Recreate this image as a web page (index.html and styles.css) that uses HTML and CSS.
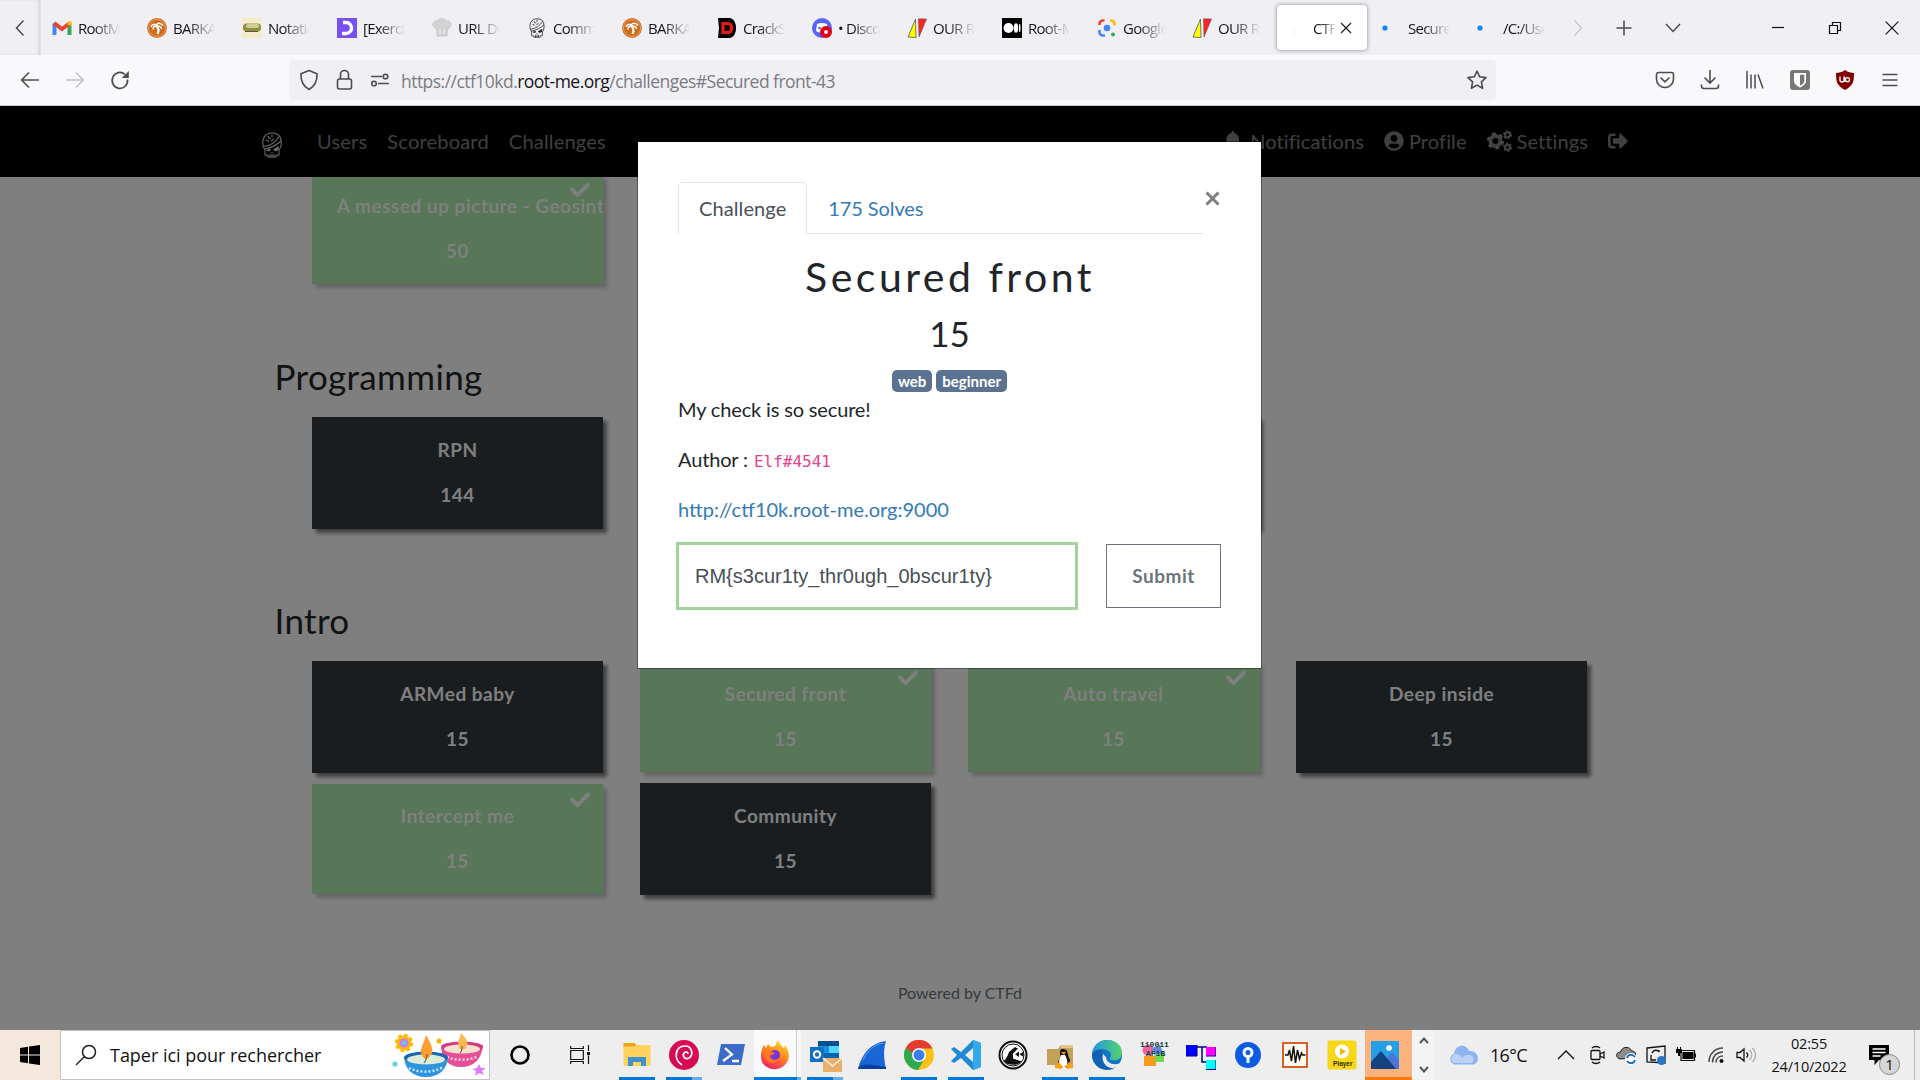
FILE: index.html
```html
<!DOCTYPE html>
<html lang="en">
<head>
<meta charset="utf-8">
<title>CTFd</title>
<link rel="stylesheet" href="styles.css">
</head>
<body>
<svg class="defs" width="0" height="0">
  <defs>
    <symbol id="check" viewBox="0 0 512 512"><path fill="currentColor" d="M173.898 439.404l-166.4-166.4c-9.997-9.997-9.997-26.206 0-36.204l36.203-36.204c9.997-9.998 26.207-9.998 36.204 0L192 312.69 432.095 72.596c9.997-9.997 26.207-9.997 36.204 0l36.203 36.204c9.997 9.997 9.997 26.206 0 36.204l-294.4 294.401c-9.998 9.997-26.207 9.997-36.204-.001z"/></symbol>
    <symbol id="skull" viewBox="0 0 20 26"><g fill="none" stroke="currentColor" stroke-width="1.050"><path d="M3 18C0 14 .5 8 2 5.500 4 2 7 1 10 1s7 1 8.500 5c1.200 4 1 9-1.500 12v5l-3 .5v1.500H6v-1.500l-3-.5z"/><path d="M1.500 14.500C8 14 14 10 17 4.500M2.500 17c7-1 12-4 16.500-8M6 4l1 2 2 .5M10 2.500v2.500M4 8l3 1.500M9 9l3-2M8 22v3M10 22v3M12 22v3"/></g><path fill="currentColor" d="M4 18l4-1 1 1.500-3 1zM11 17.500l6-3.500-.5 4-3 1.500zM9 21l1-1.500 1 1.500z"/></symbol>
    <symbol id="palm" viewBox="0 0 20 20"><circle cx="10" cy="10" r="9.900" fill="#cf6a18"/><circle cx="10" cy="10" r="8.500" fill="none" stroke="#eeb98a" stroke-width=".7"/><path d="M10.500 16c1.500-3 1-6-1-8" fill="none" stroke="#fff" stroke-width="2.200"/><path d="M9.500 8C7.500 5 5 6.500 4 9M9.500 8c-2.500 0-3.500 1.500-3.500 3.500M9 8c1-4 5-3.500 7-.5M9.500 8c3-.5 5 1 5 3" fill="none" stroke="#fff" stroke-width="1.500"/></symbol>
    <symbol id="tri" viewBox="0 0 20 20"><path d="M1 19L8.500 1 9 19.500z" fill="#ff0" stroke="#555" stroke-width=".8"/><path d="M11.500.8L19.500 1 12 19z" fill="#f22" stroke="#555" stroke-width=".6"/></symbol>
  </defs>
</svg>

<header class="tabbar">
  <div class="scroll-left"><svg width="10" height="18" viewBox="0 0 10 18"><path d="M8.500 1.500L1.500 9l7 7.500" fill="none" stroke="#4b4b55" stroke-width="1.500"/></svg></div>
  <div class="tabs">
    <div class="tab"><svg viewBox="0 0 20 20"><path d="M2.500 17V5.500" stroke="#4285f4" stroke-width="4"/><path d="M17.500 17V5.500" stroke="#34a853" stroke-width="4"/><path d="M2 5l8 6 8-6" fill="none" stroke="#ea4335" stroke-width="4"/><path d="M15.500 7V4l4-1v5z" fill="#fbbc04"/></svg><span>RootMe</span></div>
    <div class="tab"><svg><use href="#palm"/></svg><span>BARKAN</span></div>
    <div class="tab"><svg viewBox="0 0 20 20"><path fill="#f7ecca" d="M0 0h20v20H0z"/><rect x="1" y="5.500" width="18" height="8" rx="3.500" fill="#8f8f4a"/><rect x="4" y="6" width="13" height="4" rx="2" fill="#cfcf9a"/><path d="M3 13.500h13" stroke="#5a5a2a"/></svg><span>Notation</span></div>
    <div class="tab"><svg viewBox="0 0 20 20"><path fill="#7950f2" d="M0 0h20v20H0z"/><path d="M6 4.500h3a5.300 5.300 0 0 1 0 11H5" fill="none" stroke="#fff" stroke-width="3.400"/></svg><span>[Exercice</span></div>
    <div class="tab"><svg viewBox="0 0 20 20"><path d="M5 18l-.5-7C-1 9 0 2 5.500 3 7-.5 13-.5 14.500 3c5.500-1 6.500 6 1 8L15 18z" fill="#d2d2d2" stroke="#bbb" stroke-width=".6"/><path d="M8 11v5M12 11v5" stroke="#eee"/></svg><span>URL De</span></div>
    <div class="tab"><svg><use href="#skull"/></svg><span>Commu</span></div>
    <div class="tab"><svg><use href="#palm"/></svg><span>BARKAN</span></div>
    <div class="tab"><svg viewBox="0 0 20 20"><path d="M1 0h12c4 1 6 5 6 10s-2 9-6 10H1l1-10z" fill="#000"/><path d="M6 5.500h4.500c3 0 4 2 4 4.500s-1 4.500-4 4.500H6z" fill="none" stroke="#f11616" stroke-width="3.200"/></svg><span>CrackSt</span></div>
    <div class="tab"><svg viewBox="0 0 20 20"><circle cx="10" cy="10" r="10" fill="#5865f2"/><path d="M5 6c3-1.500 7-1.500 10 0l1 7-3 1-6 .5L4 13z" fill="#fff"/><circle cx="7.500" cy="10" r="1.300" fill="#5865f2"/><circle cx="14" cy="14" r="6" fill="#e00018"/><circle cx="14" cy="14" r="1.900" fill="#fff"/></svg><span>• Discor</span></div>
    <div class="tab"><svg><use href="#tri"/></svg><span>OUR RO</span></div>
    <div class="tab"><svg viewBox="0 0 20 20"><path d="M0 0h20v20H0z"/><g fill="#fff"><circle cx="6.500" cy="10" r="5"/><ellipse cx="14" cy="10" rx="2.200" ry="4.700"/><ellipse cx="17.700" cy="10" rx=".8" ry="4.200"/></g></svg><span>Root-Me</span></div>
    <div class="tab"><svg viewBox="0 0 20 20" fill="none" stroke-width="2.600"><path d="M2.500 7V6A3.500 3.500 0 0 1 6 2.500h1.500" stroke="#ea4335"/><path d="M13 2.500h1A3.500 3.500 0 0 1 17.500 6v1.500" stroke="#fbbc04"/><path d="M2.500 12v2A3.500 3.500 0 0 0 6 17.500h2" stroke="#4285f4"/><circle cx="10" cy="10" r="3.300" fill="#4285f4"/><circle cx="16" cy="16.500" r="2" fill="#34a853"/></svg><span>Google</span></div>
    <div class="tab"><svg><use href="#tri"/></svg><span>OUR RO</span></div>
    <div class="tab active"><svg viewBox="0 0 20 20"><circle cx="7" cy="14" r=".7" fill="#ccc"/></svg><span>CTFd</span><svg class="tab-x" viewBox="0 0 12 12"><path d="M1 1l10 10M11 1L1 11" stroke="#222" stroke-width="1.300"/></svg></div>
    <div class="tab"><svg viewBox="0 0 20 20"><circle cx="3" cy="10" r="2.600" fill="#0a84ff"/></svg><span>Secured</span></div>
    <div class="tab"><svg viewBox="0 0 20 20"><circle cx="3" cy="10" r="2.600" fill="#0a84ff"/></svg><span>/C:/Users</span></div>
  </div>
  <div class="tab-tools">
    <svg width="10" height="18" viewBox="0 0 10 18"><path d="M1.500 1.500l7 7.500-7 7.500" fill="none" stroke="#c9c9ce" stroke-width="1.500"/></svg>
    <svg width="16" height="16" viewBox="0 0 16 16"><path d="M8 .5v15M.5 8h15" stroke="#4b4b55" stroke-width="1.500"/></svg>
    <svg width="16" height="10" viewBox="0 0 16 10"><path d="M1 1l7 7.500L15 1" fill="none" stroke="#4b4b55" stroke-width="1.500"/></svg>
  </div>
  <div class="win-tools">
    <svg width="14" height="14" viewBox="0 0 14 14"><path d="M1 6.500h12" stroke="#111" stroke-width="1.200"/></svg>
    <svg width="14" height="14" viewBox="0 0 14 14"><path d="M1.500 4.500h8v8h-8zM4.500 4V1.500h8v8H10" fill="none" stroke="#111" stroke-width="1.200"/></svg>
    <svg width="14" height="14" viewBox="0 0 14 14"><path d="M.7.700l12.600 12.600M13.300.7L.7 13.300" stroke="#111" stroke-width="1.200"/></svg>
  </div>
</header>

<div class="toolbar">
  <div class="nav-buttons">
    <svg width="20" height="20" viewBox="0 0 20 20"><path d="M19 10H2M9 2.500L1.700 10 9 17.500" fill="none" stroke="#4b4b55" stroke-width="1.600"/></svg>
    <svg width="20" height="20" viewBox="0 0 20 20"><path d="M1 10h17M11 2.500l7.300 7.500-7.300 7.500" fill="none" stroke="#c0c0c6" stroke-width="1.600"/></svg>
    <svg width="20" height="20" viewBox="0 0 20 20"><path d="M17.500 9.500A7.700 8 0 1 1 15 4.500" fill="none" stroke="#4b4b55" stroke-width="1.700"/><path d="M18.800 1v7h-7z" fill="#4b4b55"/></svg>
  </div>
  <div class="urlbar">
    <svg width="20" height="22" viewBox="0 0 20 22"><path d="M10 1.500l8 3.300c.3 7-1.500 12-8 15.700C3.500 16.800 1.700 11.800 2 4.800z" fill="none" stroke="#4b4b55" stroke-width="1.600" stroke-linejoin="round"/></svg>
    <svg width="17" height="22" viewBox="0 0 17 22"><rect x="1.500" y="10" width="14" height="10" rx="2" fill="none" stroke="#4b4b55" stroke-width="1.600"/><path d="M4.500 10V5.500a4 4 0 0 1 8 0V10" fill="none" stroke="#4b4b55" stroke-width="1.600"/></svg>
    <svg width="20" height="14" viewBox="0 0 20 14"><g fill="none" stroke="#4b4b55" stroke-width="1.600"><path d="M1 3.500h11M8 10.500h11"/><circle cx="15.500" cy="3.500" r="2.300"/><circle cx="4" cy="10.500" r="2.300"/></g></svg>
    <span class="url">https://ctf10kd.<b>root-me.org</b>/challenges#Secured front-43</span>
    <svg class="star" width="22" height="22" viewBox="0 0 22 22"><path d="M11 2l2.700 5.800 6.300.8-4.600 4.300 1.200 6.300L11 16.100l-5.600 3.100 1.200-6.300L2 8.600l6.300-.8z" fill="none" stroke="#4b4b55" stroke-width="1.600" stroke-linejoin="round"/></svg>
  </div>
  <div class="extensions">
    <svg viewBox="0 0 20 20"><path d="M3.500 2.500h13A2 2 0 0 1 18.500 4.500v4.500a8.500 8.500 0 0 1-17 0V4.500A2 2 0 0 1 3.500 2.500zM5.500 7.500l4.500 4.300 4.500-4.300" fill="none" stroke="#4b4b55" stroke-width="1.600"/></svg>
    <svg viewBox="0 0 20 20"><path d="M10 0v12.500M4.500 7.500L10 13l5.500-5.500M1.500 14.500V16a2.500 2.500 0 0 0 2.500 2.500h12a2.500 2.500 0 0 0 2.500-2.500v-1.500" fill="none" stroke="#4b4b55" stroke-width="1.600"/></svg>
    <svg viewBox="0 0 20 20"><path d="M2 1v17.500M6 4.500v14M10 4.500v14M13 4.500l5 14" fill="none" stroke="#4b4b55" stroke-width="1.500"/></svg>
    <svg viewBox="0 0 20 20"><rect width="20" height="20" rx="3" fill="#777"/><path d="M4 3h12v8c0 3-3 5-6 6.500C7 16 4 14 4 11z" fill="#fff"/><path d="M10 4.700h4.300V11c0 2-2 3.500-4.300 4.700z" fill="#777"/></svg>
    <svg viewBox="0 0 20 20"><path d="M10 0c3 2.500 6 2.500 9 3-.2 8 0 12-9 17C1 15 1.200 11 1 3c3-.5 6-.5 9-3z" fill="#800000"/><path d="M5 6.500v3.500a2 2 0 0 0 4 0V6.500M9.500 6.500V12" fill="none" stroke="#fff" stroke-width="1.300"/><circle cx="12.500" cy="9.700" r="2" fill="none" stroke="#fff" stroke-width="1.300"/></svg>
    <svg viewBox="0 0 20 20"><path d="M2.500 4.500h15M2.500 10h15M2.500 15.500h15" stroke="#4b4b55" stroke-width="1.500"/></svg>
  </div>
</div>

<div class="page">
  <nav class="navbar">
    <svg class="logo" width="20" height="26"><use href="#skull"/></svg>
    <div class="nav-links"><a>Users</a><a>Scoreboard</a><a>Challenges</a></div>
    <div class="nav-user">
      <a class="bell"><svg width="17.500" height="20" viewBox="0 0 448 512"><path fill="currentColor" d="M224 512c35.320 0 63.970-28.650 63.970-64H160.030c0 35.350 28.650 64 63.970 64zm215.390-149.710c-19.320-20.760-55.470-51.990-55.470-154.290 0-77.700-54.480-139.900-127.940-155.160V32c0-17.670-14.320-32-31.980-32s-31.980 14.330-31.980 32v20.840C118.560 68.100 64.080 130.300 64.080 208c0 102.300-36.150 133.530-55.470 154.290-6 6.450-8.660 14.160-8.610 21.710.11 16.400 12.980 32 32.100 32h383.800c19.120 0 32-15.600 32.100-32 .05-7.550-2.610-15.270-8.610-21.710z"/></svg>Notifications</a>
      <a><svg width="20" height="20" viewBox="0 0 496 512"><path fill="currentColor" d="M248 8C111 8 0 119 0 256s111 248 248 248 248-111 248-248S385 8 248 8zm0 96c48.600 0 88 39.400 88 88s-39.400 88-88 88-88-39.400-88-88 39.400-88 88-88zm0 344c-58.700 0-111.300-26.600-146.500-68.200 18.800-35.400 55.600-59.800 98.500-59.800 2.400 0 4.800.4 7.100 1.100 13 4.200 26.600 6.900 40.900 6.900 14.300 0 28-2.700 40.900-6.900 2.300-.7 4.700-1.100 7.100-1.100 42.900 0 79.700 24.400 98.500 59.800C359.300 421.400 306.700 448 248 448z"/></svg>Profile</a>
      <a><svg width="25" height="22" viewBox="0 0 25 22" fill="none" stroke="currentColor"><circle cx="8.500" cy="11" r="5" stroke-width="4"/><circle cx="8.500" cy="11" r="7.600" stroke-width="2.200" stroke-dasharray="4 3.960"/><circle cx="20.500" cy="4.800" r="2.500" stroke-width="2"/><circle cx="20.500" cy="4.800" r="3.900" stroke-width="1.300" stroke-dasharray="2 2.080"/><circle cx="20.500" cy="17.200" r="2.500" stroke-width="2"/><circle cx="20.500" cy="17.200" r="3.900" stroke-width="1.300" stroke-dasharray="2 2.080"/></svg>Settings</a>
      <a><svg width="20" height="20" viewBox="0 0 512 512"><path fill="currentColor" d="M497 273L329 441c-15 15-41 4.500-41-17v-96H152c-13.300 0-24-10.700-24-24v-96c0-13.300 10.700-24 24-24h136V88c0-21.400 25.900-32 41-17l168 168c9.300 9.400 9.300 24.600 0 34zM192 436v-40c0-6.600-5.400-12-12-12H96c-17.700 0-32-14.300-32-32V160c0-17.700 14.300-32 32-32h84c6.600 0 12-5.400 12-12V76c0-6.600-5.400-12-12-12H96c-53 0-96 43-96 96v192c0 53 43 96 96 96h84c6.600 0 12-5.400 12-12z"/></svg></a>
    </div>
  </nav>

  <main class="board">
    <section class="first">
      <div class="cards">
        <div class="card solved"><svg class="tick"><use href="#check"/></svg><p>A messed up picture - Geosint</p><p>50</p></div>
      </div>
    </section>
    <section>
      <h3>Programming</h3>
      <div class="cards">
        <div class="card"><p>RPN</p><p>144</p></div>
        <div class="card"></div>
        <div class="card"></div>
      </div>
    </section>
    <section>
      <h3>Intro</h3>
      <div class="cards">
        <div class="card"><p>ARMed baby</p><p>15</p></div>
        <div class="card solved"><svg class="tick"><use href="#check"/></svg><p>Secured front</p><p>15</p></div>
        <div class="card solved"><svg class="tick"><use href="#check"/></svg><p>Auto travel</p><p>15</p></div>
        <div class="card"><p>Deep inside</p><p>15</p></div>
        <div class="card solved"><svg class="tick"><use href="#check"/></svg><p>Intercept me</p><p>15</p></div>
        <div class="card"><p>Community</p><p>15</p></div>
      </div>
    </section>
    <footer>Powered by CTFd</footer>
  </main>

  <div class="backdrop"></div>
  <div class="modal">
    <div class="modal-head">
      <div class="modal-tabs"><a class="current">Challenge</a><a>175 Solves</a></div>
      <svg class="close" width="15" height="15" viewBox="0 0 15 15"><path d="M1.500 1.500l12 12M13.500 1.500l-12 12" stroke="#7f7f7f" stroke-width="3"/></svg>
    </div>
    <h2>Secured front</h2>
    <h3>15</h3>
    <div class="badges"><span>web</span><span>beginner</span></div>
    <p>My check is so secure!</p>
    <p>Author : <code>Elf#4541</code></p>
    <p><a>http://ctf10k.root-me.org:9000</a></p>
    <div class="answer"><div class="field">RM{s3cur1ty_thr0ugh_0bscur1ty}</div><div class="submit">Submit</div></div>
  </div>
</div>

<div class="taskbar">
  <div class="start"><svg width="20" height="20" viewBox="0 0 20 20"><path d="M0 3l8-1.200v7.700H0zM9 1.600L20 0v9.500H9zM0 10.500h8v7.700L0 17zM9 10.500h11V20L9 18.400z"/></svg></div>
  <div class="search">
    <svg width="22" height="22" viewBox="0 0 22 22"><circle cx="14" cy="8" r="6.500" fill="none" stroke="#222" stroke-width="1.500"/><path d="M9.500 12.500L1 21" stroke="#222" stroke-width="1.500"/></svg>
    <span>Taper ici pour rechercher</span>
    <svg class="diya" width="94" height="46" viewBox="0 0 94 46">
      <circle cx="13" cy="11" r="7.500" fill="#ffb900"/><circle cx="13" cy="11" r="8" fill="none" stroke="#ffb900" stroke-width="2.500" stroke-dasharray="3.500 2.780"/><circle cx="13" cy="11" r="4.500" fill="#c97cf5"/><circle cx="13" cy="11" r="2.300" fill="#5ecbe8"/>
      <circle cx="48" cy="9" r="2.600" fill="#ffb900"/><circle cx="4" cy="32" r="2.600" fill="#5fd6e8"/>
      <path d="M50 15c1 12 7 20 20 20s21-8 22-22z" fill="#e64f97"/><ellipse cx="71" cy="15" rx="21" ry="5.500" fill="#d23a86"/><ellipse cx="71" cy="17" rx="18" ry="4.500" fill="#f7e1cf"/><path d="M70 18c-6-8-1-10 0-17 7 7 8 12 4 16z" fill="#ffb84f"/><path d="M69 21c2-2 2-4 2-7" fill="none" stroke="#543"/><path d="M56 25c9 4 22 4 31-1" fill="none" stroke="#fbd3e4" stroke-width="2.500" stroke-dasharray="2 2"/>
      <path d="M13 25c1 12 8 20 22 20s21-8 22-20z" fill="#2f93e0"/><ellipse cx="35" cy="25.500" rx="22" ry="6" fill="#1766b3"/><ellipse cx="35" cy="27.500" rx="19" ry="5" fill="#dcecd8"/><path d="M34 27c-8-8-2-12 1-24 7 12 9 18 2 23z" fill="#ff9d2e"/><path d="M33 31c2-3 3-5 3-9" fill="none" stroke="#543" stroke-width="1"/><path d="M18 36c10 5 24 5 34-1" fill="none" stroke="#c9e8fb" stroke-width="2.500" stroke-dasharray="2 2"/>
      <path d="M88 32l2 4 5 0-4 3 2 4-5-2-4 3 1-5-4-2 5-1z" fill="#dd7cf5"/>
    </svg>
  </div>
  <div class="sys"><svg width="22" height="22" viewBox="0 0 22 22"><circle cx="11" cy="11" r="8.500" fill="none" stroke="#000" stroke-width="2.600"/></svg></div>
  <div class="sys"><svg width="20" height="20" viewBox="0 0 20 20" fill="none" stroke="#111" stroke-width="1.200"><path d="M.7 5.500h12.600v9H.7zM.7 1v2.500h12.600V1M.7 19v-2.500h12.600V19M18.500 0v6M18.500 10.500V19"/><path d="M17 7h3v3h-3z" fill="#111" stroke="none"/></svg></div>
  <div class="apps">
    <div class="app open"><svg viewBox="0 0 30 30"><path d="M1.500 3h11l2.500 3v3H1.500z" fill="#e8a60c"/><path d="M1.500 6.500h11L15 5h13.500v21h-27z" fill="#ffd35c"/><path d="M6 26v-9h18v9h-5v-4h-8v4z" fill="#3e92cf"/></svg></div>
    <div class="app open multi"><svg viewBox="0 0 30 30"><circle cx="15" cy="15" r="15" fill="#d70a53"/><path d="M13 25C4 19 6 6 16 6c7 0 9 9 4 12-4 2-7-2-5-5 2-2 4-1 4 1" fill="none" stroke="#fff" stroke-width="1.700"/></svg></div>
    <div class="app"><svg viewBox="0 0 30 30"><path d="M5 4h24l-4 21H1z" fill="#3b6cc9"/><path d="M9 8l7 6.500-9 6.500M16 21h7" fill="none" stroke="#fff" stroke-width="2.300"/></svg></div>
    <div class="app open firefox"><svg viewBox="0 0 30 30"><defs><linearGradient id="ff" x1=".8" y1="0" x2=".3" y2="1"><stop offset="0" stop-color="#ffe226"/><stop offset=".45" stop-color="#ff8a1c"/><stop offset="1" stop-color="#ee2360"/></linearGradient></defs><path d="M18 0c1 5 4 4 5 8 2-1 2-2 2-3 4 5 5 12 2 17-6 10-20 9-25 0C0 17 1 9 4 5l2 3 2-4 3 3c3 0 4-1 5-2 0-2 1-4 2-5z" fill="url(#ff)"/><circle cx="15" cy="15" r="5" fill="#7a35d8"/><path d="M3 9c5 0 7 0 8 3l4 1c-3 3-5 1-6 4 1 4 7 4 10 1-3 7-12 6-14-1z" fill="#ff7a1f"/></svg></div>
    <div class="app open multi"><svg class="outlook" viewBox="0 0 34 32"><path d="M9 1h21v20H9z" fill="#1490df"/><path d="M9 1h21v5H9z" fill="#0a4f92"/><path d="M20 6h10v7H20z" fill="#50d9ff"/><path d="M9 13h21v9H9z" fill="#0364b8"/><path d="M1 7h14v15H1z" fill="#1070c4"/><circle cx="8" cy="14.500" r="3.200" fill="none" stroke="#fff" stroke-width="2"/><path d="M14 18h19v14H14z" fill="#e8b06a"/><path d="M14 18l9.500 8 9.500-8" fill="none" stroke="#fff3dd" stroke-width="1.400"/></svg></div>
    <div class="app"><svg viewBox="0 0 30 30"><path d="M1 29C5 13 14 3 29 1c-3 9-2 19 0 28z" fill="#1a66d6"/><path d="M1 29c2-6 10-5 28-2v2z" fill="#0a3fa0"/><path d="M6 20C11 10 17 5 26 3" fill="none" stroke="#5aa2ff"/></svg></div>
    <div class="app open"><svg viewBox="0 0 30 30"><circle cx="15" cy="15" r="15" fill="#fbc116"/><path d="M2 7.500A15 15 0 0 1 28 7.500H15z" fill="#e33b2e"/><path d="M2 7.500A15 15 0 0 0 14 30l7-12-6-3-6 2z" fill="#2da94f"/><path d="M2 7.500L9 18l6-9.500h13.300A15 15 0 0 0 2 7.500z" fill="#e33b2e"/><path d="M2 7.500L9 19l3-3z" fill="#2da94f"/><circle cx="15" cy="15" r="7" fill="#fff"/><circle cx="15" cy="15" r="5.500" fill="#3b7ded"/></svg></div>
    <div class="app open"><svg viewBox="0 0 30 30"><path d="M22 0l8 3v24l-8 3L10 18l-7 5-3-2 6-6-6-6 3-2 7 5zM22 8l-8 7 8 7z" fill="#1f8ad2" fill-rule="evenodd"/><path d="M22 0l8 3v24l-8 3z" fill="#35a7ee"/></svg></div>
    <div class="app"><svg viewBox="0 0 30 30"><circle cx="15" cy="15" r="13.500" fill="#fff" stroke="#111" stroke-width="2"/><circle cx="15" cy="15" r="11" fill="none" stroke="#111"/><path d="M5 21C8 20 9 17 11 12l6-5 3 1.500-5 5 0 5 9 3c-4 4-13 5-19-.5z" fill="#111"/><path d="M21 11.500v5.500l-4-2.700zM25.500 11.500v5.500l-4-2.700z" fill="#111"/></svg></div>
    <div class="app open"><svg viewBox="0 0 30 30"><path d="M2 9h11l3-4h12v20H2z" fill="#c3a257"/><path d="M16 5h12v3H16z" fill="#e0c88c"/><path d="M18 9c6 0 4 6 7 11l-1 7H12c0-6 4-8 3-13 0-3 0-5 3-5z" fill="#111"/><path d="M16 15h4c3 5 4 12-2 12s-4-8-2-12z" fill="#fff"/><path d="M10 25l4-3 4 5-2 2-6-1zM28 25l-4-3-4 5 2 2 6-1zM16 12h5l-2 3z" fill="#f5a11a"/></svg></div>
    <div class="app open"><svg viewBox="0 0 30 30"><defs><linearGradient id="eg" x1="0" x2="1"><stop offset="0" stop-color="#2197e3"/><stop offset="1" stop-color="#56d36a"/></linearGradient></defs><circle cx="15" cy="15" r="15" fill="#1573c8"/><path d="M0 14C1 5 8 0 15 0c9 0 15 6 15 12 0 7-5 9-10 8-3-.5-2-2-1-4 0-5-5-7-9-7-5 0-9 2-10 5z" fill="url(#eg)"/><path d="M11 14c-2 6 2 14 10 14 4 0 6-3 7-5-6 3-14 0-14-6z" fill="#ececec"/><path d="M11 12c-3 8 1 17 10 17C11 32 0 26 0 14c3-5 9-5 11-2z" fill="#1361b4"/></svg></div>
    <div class="app"><svg class="crypt" viewBox="0 0 30 30"><circle cx="9" cy="10" r="5.500" fill="#f0629c"/><path d="M13 8l8-3 3 8-8 3z" fill="#5b86e0"/><path d="M5 16h12v10H5z" fill="#f79a1e"/><path d="M16 14h9v8h-9z" fill="#6fd94f"/><text x="1" y="7">110011</text><text x="7" y="16">AF1B</text></svg></div>
    <div class="app"><svg viewBox="0 0 30 30"><path d="M11 7h10M16 7v15h5" fill="none" stroke="#000080" stroke-width="1.500"/><path d="M0 5h11v11H0z" fill="#00f"/><path d="M20 7h10v9H20z" fill="#f0f"/><path d="M20 20h10v9H20z" fill="#0ff"/><path d="M0 16h11V5M20 16h10V7M20 29.500h10V20" fill="none" stroke="#000080"/></svg></div>
    <div class="app"><svg viewBox="0 0 30 30"><circle cx="15" cy="15" r="13" fill="#0b5be3"/><circle cx="15" cy="12.500" r="4" fill="none" stroke="#fff" stroke-width="3"/><path d="M13.500 16h3v7h-3z" fill="#fff"/></svg></div>
    <div class="app"><svg viewBox="0 0 30 30"><path d="M3 3h24v24H3z" fill="#fff8ef" stroke="#d2622a" stroke-width="2"/><path d="M5 15h3l1.500-5 2 11 2-15 2 17 2-13 2 9 2-6 1 2h3" fill="none" stroke="#111" stroke-width="1.500"/></svg></div>
    <div class="app"><svg class="player" viewBox="0 0 30 30"><rect x=".5" y=".5" width="29" height="29" rx="2" fill="#f6d817"/><circle cx="15" cy="11.500" r="7" fill="#fff"/><path d="M13 8l6 3.500-6 3.500z" fill="#e6b800"/><text x="6" y="25.500">Player</text></svg></div>
    <div class="app photos"><svg viewBox="0 0 30 30"><path d="M1 1h28v28H1z" fill="#25a0e6"/><circle cx="19" cy="8" r="2.800" fill="#fff"/><path d="M15 20l7-8 7 8v9H15z" fill="#4b76d8"/><path d="M1 22L11 11l15 18H1z" fill="#14417f"/></svg></div>
  </div>
  <div class="scroller"><svg width="10" height="7" viewBox="0 0 10 7"><path d="M1 6l4-4.500L9 6" fill="none" stroke="#555" stroke-width="2"/></svg><svg width="10" height="7" viewBox="0 0 10 7"><path d="M1 1l4 4.500L9 1" fill="none" stroke="#555" stroke-width="2"/></svg></div>
  <div class="weather"><svg width="30" height="20" viewBox="0 0 30 20"><path d="M6 19.500a6 6 0 0 1 0-11C8-2 19-1 21 6c5-.5 9 3 9 7s-2 6.500-6 6.500z" fill="#8db2ef"/><path d="M6 18a5 5 0 0 1 1-9c4 0 6 1 7 4 3-4 9-4 11-1 2 4-1 6-3 6z" fill="#bcd2f8"/></svg><span>16°C</span></div>
  <div class="tray">
    <svg viewBox="0 0 20 20"><path d="M2 14l8-8 8 8" fill="none" stroke="#111" stroke-width="1.400"/></svg>
    <svg viewBox="0 0 20 20" fill="none" stroke="#111" stroke-width="1.300"><rect x="5" y="5.500" width="9" height="9" rx="1"/><path d="M14 9l4-2v6l-4-2M6 3c2-2 6-2 8 0M6 17c2 2 6 2 8 0"/></svg>
    <svg viewBox="0 0 20 20"><path d="M4 14C-1 13 0 7 4.500 7 6 1 14 1 15.500 6c5 0 5 5 3 7z" fill="#8b8b8b" stroke="#222"/><circle cx="15" cy="14" r="6" fill="#fff"/><path d="M11 13c1-4 6-4 8-1M19 15c-1 4-6 4-8 1" fill="none" stroke="#0a6cbd" stroke-width="1.700"/></svg>
    <svg viewBox="0 0 20 20"><path d="M1 3l18-2v17L1 17z" fill="none" stroke="#111" stroke-width="1.300"/><path d="M6 8c2-4 6-3 7-1V5M5 10v5h5" fill="none" stroke="#111" stroke-width="1.300"/><circle cx="15.500" cy="15.500" r="4.500" fill="#2a74c4"/></svg>
    <svg viewBox="0 0 20 20"><path d="M6 6.500h12v8H6z" stroke="#fff" stroke-width=".8"/><path d="M5 5.500h13.500v10H5zM19.500 8.500v4" fill="none" stroke="#111" stroke-width="1.200"/><path d="M0 4h6v4H4v3H2V8H0zM1 2h1v2H1zM4 2h1v2H4z"/></svg>
    <svg viewBox="0 0 20 20" fill="none" stroke="#111" stroke-width="1.500"><g opacity=".75"><path d="M3 17C3 9 9 3 17 3M6.500 17.500C6.500 11 11 7 17 7M10 17.500c0-4 3-6.500 7-6.500"/></g><circle cx="15.500" cy="16" r="1.300" fill="#111"/></svg>
    <svg viewBox="0 0 20 20" fill="none" stroke="#111" stroke-width="1.300"><path d="M1 7.500h3L8 4v12l-4-3.500H1zM10.500 7.500c1.500 1.500 1.500 3.500 0 5"/><path d="M13.500 5c3 3 3 7 0 10M16.500 3c4 4 4 10 0 14" stroke="#aaa"/></svg>
  </div>
  <div class="clock"><span>02:55</span><span>24/10/2022</span></div>
  <div class="notes"><svg width="22" height="22" viewBox="0 0 22 22"><path d="M1 1h20v15H11l-4.500 5v-5H1z"/><path d="M4.500 5h13M4.500 8.500h13M4.500 12h8" stroke="#fff" stroke-width="1.300"/></svg><span class="count">1</span></div>
  <div class="desktop"></div>
</div>
</body>
</html>
```
FILE: styles.css
```css
* { box-sizing: border-box; }
body { margin: 0; width: 1920px; height: 1080px; overflow: hidden; display: flex; flex-direction: column; font-family: Lato, sans-serif; font-size: 20px; line-height: 30px; color: #212529; background: #fff; }
svg { display: block; flex: none; }
.defs { position: absolute; }
h2, h3, p { margin: 0; }
h2, h3 { font-weight: 400; }

/* browser chrome */
.tabbar { flex: none; height: 55px; display: flex; background: #f0eff4; font-family: "Open Sans", sans-serif; }
.scroll-left { width: 41px; display: flex; align-items: center; padding-left: 15px; border-right: 1px solid #e0dfe5; box-shadow: inset -2px 0 2px #d9d8de; }
.tabs { display: flex; padding: 5px 0; width: 1520px; }
.tab { width: 95px; flex: none; height: 45px; display: flex; align-items: center; padding: 1px 0 0 11px; gap: 6px; border-radius: 4px; }
.tab svg { width: 20px; height: 20px; }
.tab span { width: 43px; overflow: hidden; white-space: nowrap; font-size: 15px; line-height: 22px; letter-spacing: -.75px; color: #15141a; -webkit-mask-image: linear-gradient(90deg, #000 35%, transparent 98%); mask-image: linear-gradient(90deg, #000 35%, transparent 98%); }
.tab.active { background: #fff; box-shadow: 0 0 4px rgba(0,0,0,.45); width: 90px; margin: 0 4px 0 1px; padding: 0 0 0 10px; }
.tab.active span { width: 24px; }
.tab.active .tab-x { width: 12px; height: 12px; margin-left: -3px; }
.tab-tools { display: flex; align-items: center; gap: 33px; padding-left: 12px; }
.win-tools { display: flex; align-items: center; gap: 43px; margin-left: auto; padding-right: 21px; }

.toolbar { flex: none; height: 51px; display: flex; align-items: center; background: #f9f9fb; border-bottom: 1px solid #ccc; }
.nav-buttons { width: 289px; padding-left: 20px; display: flex; gap: 25px; }
.urlbar { width: 1207px; height: 40px; display: flex; align-items: center; background: #f0eff4; border-radius: 5px; padding: 0 8px 0 10px; gap: 17px; }
.url { font-family: "Open Sans", sans-serif; font-size: 17.500px; letter-spacing: -.53px; color: #7c7b82; margin-left: -6px; padding-top: 2px; white-space: nowrap; }
.url b { font-weight: 400; color: #15141a; }
.star { margin-left: auto; }
.extensions { flex: 1; display: flex; justify-content: flex-end; gap: 25px; padding-right: 20px; }
.extensions svg { width: 20px; height: 20px; }

/* site */
.page { position: relative; height: 924px; flex: none; overflow: hidden; display: flex; flex-direction: column; }
.navbar { flex: none; height: 71px; background: #000; color: rgba(255,255,255,.5); display: flex; align-items: center; padding: 0 292px 0 262px; }
.logo { color: #ddd; margin-top: 6px; }
.nav-links { display: flex; gap: 20px; margin: -2px 0 0 35px; letter-spacing: .2px; }
.nav-user { display: flex; gap: 20px; margin: -2px 0 0 auto; letter-spacing: .1px; }
.nav-user a { display: flex; align-items: center; gap: 5px; }
.nav-user .bell { gap: 9px; }
.board { flex: 1; overflow: hidden; padding-left: 276px; display: flex; flex-direction: column; }
.board section { margin-bottom: 70px; }
.board .first { margin-top: -4px; }
.board h3 { font-size: 35px; line-height: 42px; margin: 0 0 20px -1.500px; letter-spacing: .35px; }
.cards { display: grid; grid-template-columns: repeat(4, 291px); grid-auto-rows: 112px; gap: 10px 37px; margin-left: 36px; }
.card { position: relative; overflow: hidden; background: #343a40; color: #fff; box-shadow: 3.750px 3.750px 3.750px grey; padding: 18px 25px 0; text-align: center; font-size: 19px; font-weight: 700; letter-spacing: .5px; white-space: nowrap; }
.card p + p { margin-top: 15px; }
.card.solved { background: #37d63e; opacity: .4; margin: 1px 0; padding-top: 17px; }
.tick { position: absolute; right: 13px; top: 6px; width: 20px; height: 20px; }
footer { margin: 16px 276px 0 0; text-align: center; font-size: 16px; line-height: 24px; color: #6c757d; }
.backdrop { position: absolute; inset: 0; background: rgba(0,0,0,.5); }
.modal { position: absolute; left: 638px; top: 36px; width: 623px; height: 526px; background: #fff; box-shadow: 0 0 0 1px rgba(0,0,0,.35); padding: 40px; }
.modal-head { display: flex; height: 52px; gap: 2px; }
.modal-tabs { width: 525px; display: flex; border-bottom: 1px solid #dee2e6; }
.modal-tabs a { height: 52px; padding: 10px 20px; border: 1px solid transparent; color: #337ab7; letter-spacing: -.1px; }
.modal-tabs .current { color: #495057; border-color: #dee2e6 #dee2e6 #fff; border-radius: 5px 5px 0 0; letter-spacing: .1px; }
.close { margin-top: 9px; }
.modal h2 { font-size: 41px; line-height: 48px; letter-spacing: 3.500px; text-align: center; margin-top: 19px; padding-left: 1px; }
.modal h3 { font-size: 35px; line-height: 42px; text-align: center; margin-top: 11px; }
.badges { display: flex; justify-content: center; gap: 4px; margin: 16px 0 2px; }
.badges span { height: 22px; border-radius: 5px; background: #5b7290; color: #fff; font-size: 15px; line-height: 22px; font-weight: 700; padding: 0 6px; }
.modal p { height: 30px; margin-bottom: 20px; letter-spacing: -.15px; }
.modal p a { color: #337ab7; letter-spacing: 0; }
code { font-family: "DejaVu Sans Mono", monospace; font-size: 16px; line-height: 1; letter-spacing: 0; color: #e83e8c; margin-left: 1px; }
.answer { display: flex; justify-content: space-between; align-items: center; margin: -2px 0 0 -2px; }
.field { width: 402px; height: 68px; border: 3px solid #a3d39c; padding-left: 16px; font-family: "Liberation Sans", Arial, sans-serif; line-height: 62px; color: #495057; }
.submit { width: 115px; height: 64px; border: 1px solid #6c757d; color: #6c757d; font-size: 19px; font-weight: 700; letter-spacing: .5px; text-align: center; line-height: 61px; }

/* taskbar */
.taskbar { flex: none; height: 50px; display: flex; background: #eee; font-family: "Open Sans", sans-serif; color: #111; }
.start { width: 60px; background: #f4e7dc; display: flex; align-items: center; justify-content: center; }
.search { width: 430px; background: #fff; border: 1px solid #c4c4c4; display: flex; align-items: center; padding-left: 14px; }
.search span { margin-left: 13px; font-size: 18px; letter-spacing: -.03px; white-space: nowrap; }
.diya { margin: 0 4px 0 auto; }
.sys { width: 60px; display: flex; align-items: center; justify-content: center; }
.apps { display: flex; margin-left: 3px; }
.app { width: 47px; display: flex; align-items: center; justify-content: center; position: relative; }
.app svg { width: 30px; height: 30px; }
.app .outlook { width: 34px; height: 32px; margin: 2px 0 0 2px; }
.app.open::after { content: ""; position: absolute; bottom: 0; left: 6px; right: 5px; height: 3px; background: #0078d7; }
.app.multi::after { background: linear-gradient(90deg, #0078d7 72%, #66ade8 72%); }
.app.firefox { background: linear-gradient(90deg, #fafafa 42px, #ccc 42px, #ccc 43px, #f8f8f8 43px); padding-right: 5px; }
.app.firefox::after { left: 0; right: 0; background: linear-gradient(90deg, #0078d7 91%, #66ade8 91%); }
.app.photos { background: #fbb27c; border-bottom: 3px solid #ff7a0a; padding-right: 8px; }
.app.photos svg { margin-top: 3px; }
.crypt text { font: 700 8px "Liberation Mono", monospace; fill: #123c3c; }
.player text { font: 700 6.500px "Liberation Sans", sans-serif; fill: #332b00; }
.scroller { width: 22px; display: flex; flex-direction: column; align-items: center; justify-content: space-between; padding: 7px 0; background: #f3f3f3; border-left: 1px solid #fff; }
.weather { display: flex; align-items: center; gap: 12px; margin-left: 14px; width: 103px; font-size: 18px; letter-spacing: -.7px; }
.tray { display: flex; align-items: center; gap: 10px; margin-left: 5px; }
.tray svg { width: 20px; height: 20px; }
.clock { width: 106px; display: flex; flex-direction: column; align-items: center; font-size: 14.500px; line-height: 23px; letter-spacing: -.2px; padding-top: 2px; white-space: nowrap; }
.notes { position: relative; padding: 14px 0 0 6px; }
.count { position: absolute; left: 17px; top: 24px; width: 21px; height: 21px; border: 1px solid #888; border-radius: 50%; background: #d6d6d6; font-size: 15px; line-height: 19px; text-align: center; }
.desktop { margin-left: auto; width: 6px; border-left: 1px solid #bbb; }
```
